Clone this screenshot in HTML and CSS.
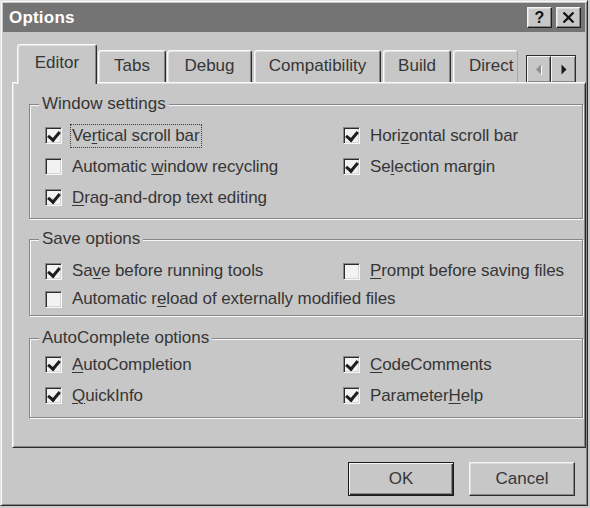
FILE: index.html
```html
<!DOCTYPE html>
<html>
<head>
<meta charset="utf-8">
<link rel="stylesheet" href="styles.css">
</head>
<body>
<div class="dialog">
  <div class="titlebar">
    <span class="title">Options</span>
    <span class="tb-btn help">?</span>
    <span class="tb-btn close"><svg width="13" height="11" viewBox="0 0 13 11"><path d="M1.5 0.5 L11.5 10.5 M11.5 0.5 L1.5 10.5" stroke="#111" stroke-width="2.2" fill="none"/></svg></span>
  </div>

  <div class="tabstrip">
    <div class="tab selected w-editor">Editor</div>
    <div class="tab w-tabs">Tabs</div>
    <div class="tab w-debug">Debug</div>
    <div class="tab w-compat">Compatibility</div>
    <div class="tab w-build">Build</div>
    <div class="tab clipped w-dir">Direct</div>
    <div class="scroller">
      <span class="sbtn"><svg width="8" height="11" viewBox="0 0 8 11"><path d="M6 0.5 L1 5.5 L6 10.5 Z" fill="#fff" transform="translate(1,1)"/><path d="M6 0.5 L1 5.5 L6 10.5 Z" fill="#8e8e8e"/></svg></span>
      <span class="sbtn"><svg width="8" height="11" viewBox="0 0 8 11"><path d="M1.5 0.5 L6.5 5.5 L1.5 10.5 Z" fill="#1a1a1a"/></svg></span>
    </div>
  </div>

  <div class="panel">
    <div class="group g1">
      <span class="legend">Window settings</span>
      <div class="rows">
        <label class="item"><span class="cb on"></span><span class="lbl focus">Ve<u>r</u>tical scroll bar</span></label>
        <label class="item"><span class="cb on"></span><span class="lbl">Hori<u>z</u>ontal scroll bar</span></label>
        <label class="item"><span class="cb"></span><span class="lbl">Automatic <u>w</u>indow recycling</span></label>
        <label class="item"><span class="cb on"></span><span class="lbl">Se<u>l</u>ection margin</span></label>
        <label class="item"><span class="cb on"></span><span class="lbl"><u>D</u>rag-and-drop text editing</span></label>
      </div>
    </div>

    <div class="group g2">
      <span class="legend">Save options</span>
      <div class="rows">
        <label class="item"><span class="cb on"></span><span class="lbl">Sa<u>v</u>e before running tools</span></label>
        <label class="item"><span class="cb"></span><span class="lbl"><u>P</u>rompt before saving files</span></label>
        <label class="item wide"><span class="cb"></span><span class="lbl">Automatic r<u>e</u>load of externally modified files</span></label>
      </div>
    </div>

    <div class="group g3">
      <span class="legend">AutoComplete options</span>
      <div class="rows">
        <label class="item"><span class="cb on"></span><span class="lbl"><u>A</u>utoCompletion</span></label>
        <label class="item"><span class="cb on"></span><span class="lbl"><u>C</u>odeComments</span></label>
        <label class="item"><span class="cb on"></span><span class="lbl"><u>Q</u>uickInfo</span></label>
        <label class="item"><span class="cb on"></span><span class="lbl">Parameter<u>H</u>elp</span></label>
      </div>
    </div>
  </div>

  <div class="buttons">
    <div class="btn default"><span>OK</span></div>
    <div class="btn">Cancel</div>
  </div>
</div>
</body>
</html>
```

FILE: styles.css
```css
* { box-sizing: border-box; }
html, body { margin: 0; padding: 0; }
body {
  width: 590px;
  height: 508px;
  overflow: hidden;
  background: #cbcbcb;
  font-family: "Liberation Sans", Arial, sans-serif;
  font-size: 17px;
  line-height: 20px;
  color: #363636;
}
u { text-decoration: underline; text-underline-offset: 2px; text-decoration-thickness: 1px; }

.dialog {
  width: 588px;
  height: 506px;
  background: #c7c7c7;
  border: 1px solid;
  border-color: #e2e2e2 #2c2c2c #2c2c2c #e2e2e2;
  box-shadow: inset 1px 1px #fafafa, inset -1px -1px #868686;
  padding: 2px;
  display: flex;
  flex-direction: column;
}

.titlebar {
  height: 29px;
  flex: none;
  background: #747474;
  display: flex;
  align-items: center;
  padding: 0 4px 0 6px;
  gap: 4px;
}
.title {
  flex: 1;
  color: #fff;
  font-weight: bold;
  letter-spacing: 0.2px;
}
.tb-btn {
  width: 25px;
  height: 21px;
  background: #c7c7c7;
  border: 1px solid;
  border-color: #f4f4f4 #1e1e1e #1e1e1e #f4f4f4;
  box-shadow: inset -1px -1px #858585, inset 1px 1px #dedede;
  display: flex;
  align-items: center;
  justify-content: center;
  color: #111;
  font-weight: bold;
  font-size: 16px;
}

.tabstrip {
  height: 50px;
  flex: none;
  display: flex;
  align-items: flex-end;
  padding-left: 14px;
  padding-right: 9px;
}
.tab {
  height: 32px;
  border-top: 1px solid #fafafa;
  border-left: 1px solid #fafafa;
  border-right: 1px solid #2c2c2c;
  border-radius: 3px 3px 0 0;
  box-shadow: inset 1px 1px #e0e0e0, inset -1px 0 #868686;
  background: #c7c7c7;
  display: flex;
  align-items: center;
  justify-content: center;
  padding-bottom: 2px;
  white-space: nowrap;
}
.tab.selected {
  height: 40px;
  margin-bottom: -2px;
  padding-bottom: 4px;
  position: relative;
  z-index: 2;
}
.w-editor { width: 80px; }
.w-tabs { width: 68px; margin-left: 1px; }
.w-debug { width: 85px; margin-left: 1px; }
.w-compat { width: 127px; margin-left: 2px; }
.w-build { width: 68px; margin-left: 2px; }
.w-dir {
  width: 65px;
  margin-left: 2px;
  overflow: hidden;
  justify-content: flex-start;
  padding-left: 15px;
  border-right: 1px solid #a8a8a8;
  box-shadow: inset 1px 1px #e0e0e0;
  border-radius: 3px 3px 0 0;
}

.scroller {
  margin-left: auto;
  height: 27px;
  display: flex;
  border: 1px solid #2c2c2c;
  border-bottom: none;
}
.sbtn {
  width: 24px;
  height: 26px;
  background: #c7c7c7;
  border-top: 1px solid #f4f4f4;
  border-left: 1px solid #f4f4f4;
  border-right: 1px solid #2c2c2c;
  box-shadow: inset -1px -1px #868686;
  display: flex;
  align-items: center;
  justify-content: center;
}
.sbtn:last-child { border-right: none; }

.panel {
  margin-left: 9px;
  width: 574px;
  height: 366px;
  flex: none;
  border: 1px solid;
  border-color: #fafafa #2c2c2c #2c2c2c #fafafa;
  box-shadow: inset 1px 1px #e0e0e0, inset -1px -1px #868686;
  padding: 21px 1px 0 16px;
  display: flex;
  flex-direction: column;
  position: relative;
  z-index: 1;
}

.group {
  position: relative;
  border: 1px solid #868686;
  box-shadow: inset 1px 1px #f6f6f6, 1px 1px #f6f6f6;
  margin-right: 1px;
  padding-left: 15px;
}
.legend {
  position: absolute;
  top: -11px;
  left: 9px;
  padding: 0 3px;
  background: #c7c7c7;
  white-space: nowrap;
}
.rows {
  display: grid;
  grid-template-columns: 298px 1fr;
}
.g1 { height: 115px; padding-top: 15px; }
.g1 .rows { grid-auto-rows: 31px; }
.g2 { height: 77px; padding-top: 17px; margin-top: 20px; }
.g2 .rows { grid-auto-rows: 28px; }
.g3 { height: 80px; padding-top: 10px; margin-top: 22px; }
.g3 .rows { grid-auto-rows: 31px; }
.wide { grid-column: 1 / span 2; }

.item {
  display: flex;
  align-items: center;
  gap: 9px;
  white-space: nowrap;
  letter-spacing: -0.1px;
}
.lbl { display: inline-block; padding: 2px 1px; }
.lbl.focus { outline: 1px dotted #3a3a3a; outline-offset: -1px; padding: 2px 2px; margin-left: -1px; }

.cb {
  width: 17px;
  height: 17px;
  flex: none;
  background: #f2f2f2;
  border: 1px solid;
  border-color: #868686 #f8f8f8 #f8f8f8 #868686;
  box-shadow: inset 1px 1px #2c2c2c, inset -1px -1px #d4d4d4;
  position: relative;
}
.cb.on::after {
  content: "";
  position: absolute;
  left: 4px;
  top: 1px;
  width: 5px;
  height: 9px;
  border-right: 3px solid #1e1e1e;
  border-bottom: 3px solid #1e1e1e;
  transform: rotate(40deg);
}

.buttons {
  margin-top: 14px;
  display: flex;
  justify-content: flex-end;
  align-items: center;
  gap: 15px;
  padding-right: 10px;
}
.btn {
  width: 106px;
  height: 34px;
  background: #c7c7c7;
  border: 1px solid;
  border-color: #f4f4f4 #2c2c2c #2c2c2c #f4f4f4;
  box-shadow: inset -1px -1px #868686, inset 1px 1px #dedede;
  display: flex;
  align-items: center;
  justify-content: center;
}
.btn.default {
  border: 1px solid #1a1a1a;
  box-shadow: inset 1px 1px #f4f4f4, inset -1px -1px #2c2c2c, inset -2px -2px #868686;
}
```
